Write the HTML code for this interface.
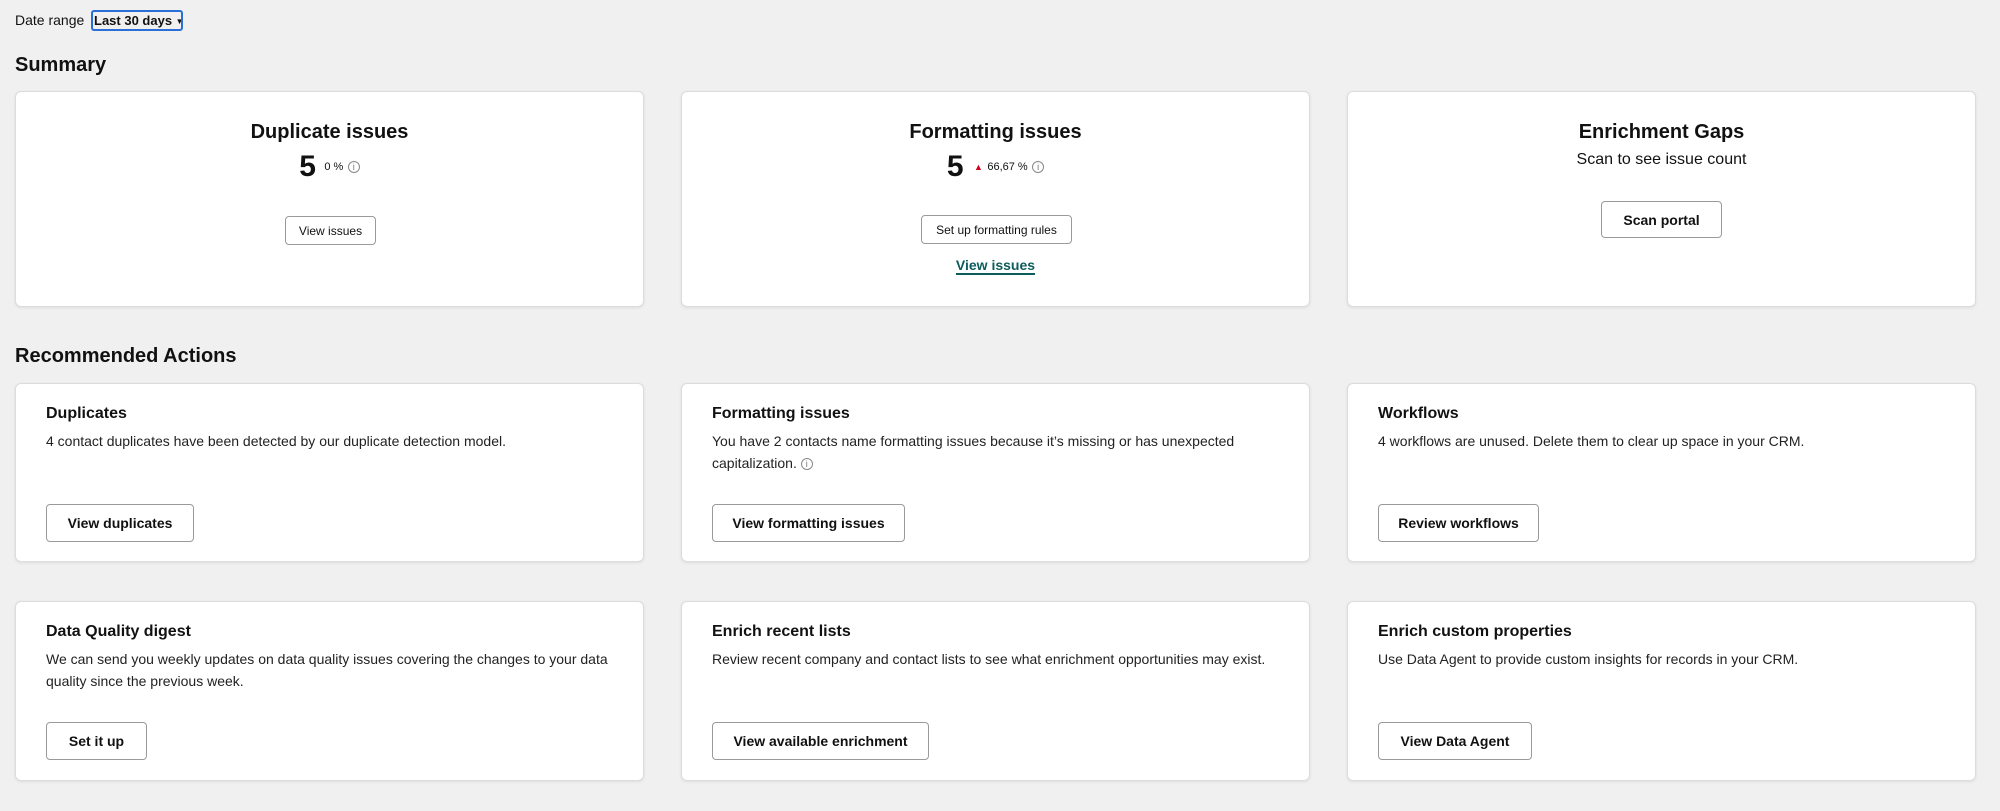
<!DOCTYPE html>
<html><head><meta charset="utf-8"><style>
*{box-sizing:border-box;margin:0;padding:0}
body{width:2000px;height:811px;background:#f0f0f0;font-family:"Liberation Sans",sans-serif;color:#111;position:relative;overflow:hidden}
.abs{position:absolute}
.card{position:absolute;background:#fff;border:1px solid #dcdcdc;border-radius:6px;box-shadow:0 1px 3px rgba(0,0,0,.08)}
.ctr{position:absolute;left:0;right:0;text-align:center}
.btn{position:absolute;border:1px solid #9a9a9a;border-radius:4px;background:#fff;font-size:14px;font-weight:bold;display:flex;align-items:center;justify-content:center;color:#111;white-space:nowrap}
.sbtn{font-weight:normal;font-size:12px}
.t{position:absolute;left:30px;font-size:16px;font-weight:bold}
.d{position:absolute;left:30px;right:30px;font-size:14px;line-height:22px;color:#222}
.i{display:inline-block;width:12px;height:12px;border:1px solid #888;border-radius:50%;font-size:9px;line-height:10px;text-align:center;color:#777;vertical-align:middle;font-style:normal}
</style></head><body>
<div class="abs" style="left:15px;top:12px;font-size:14px">Date range</div>
<div class="abs" style="left:91px;top:10px;width:92px;height:21px;border:2px solid #2a6fd6;border-radius:3px;font-size:13px;font-weight:bold;padding-left:1px;line-height:17px;white-space:nowrap;overflow:hidden">Last 30 days <span style="font-size:8px;vertical-align:middle">▼</span></div>
<div class="abs" style="left:15px;top:54px;font-size:20px;font-weight:bold">Summary</div>

<div class="card" style="left:15px;top:91px;width:629px;height:216px">
 <div class="ctr" style="top:29px;font-size:20px;font-weight:bold">Duplicate issues</div>
 <div class="ctr" style="top:58px"><span style="font-size:30px;font-weight:bold;vertical-align:middle">5</span> <span style="font-size:11px;vertical-align:middle;margin-left:4px">0 %</span> <i class="i">i</i></div>
 <div class="btn sbtn" style="left:269px;top:124px;width:91px;height:29px">View issues</div>
</div>
<div class="card" style="left:681px;top:91px;width:629px;height:216px">
 <div class="ctr" style="top:29px;font-size:20px;font-weight:bold">Formatting issues</div>
 <div class="ctr" style="top:58px"><span style="font-size:30px;font-weight:bold;vertical-align:middle">5</span> <span style="color:#d0021b;font-size:9px;vertical-align:middle;margin-left:6px">▲</span> <span style="font-size:11px;vertical-align:middle">66,67 %</span> <i class="i">i</i></div>
 <div class="btn sbtn" style="left:239px;top:123px;width:151px;height:29px">Set up formatting rules</div>
 <div class="ctr" style="top:165px;font-size:14px;font-weight:bold;color:#0d5c5c"><span style="border-bottom:2px solid #0d5c5c">View issues</span></div>
</div>
<div class="card" style="left:1347px;top:91px;width:629px;height:216px">
 <div class="ctr" style="top:29px;font-size:20px;font-weight:bold">Enrichment Gaps</div>
 <div class="ctr" style="top:59px;font-size:16px">Scan to see issue count</div>
 <div class="btn" style="left:253px;top:109px;width:121px;height:37px">Scan portal</div>
</div>

<div class="abs" style="left:15px;top:345px;font-size:20px;font-weight:bold">Recommended Actions</div>

<div class="card" style="left:15px;top:383px;width:629px;height:179px">
 <div class="t" style="top:21px">Duplicates</div>
 <div class="d" style="top:46px">4 contact duplicates have been detected by our duplicate detection model.</div>
 <div class="btn" style="left:30px;top:120px;width:148px;height:38px">View duplicates</div>
</div>
<div class="card" style="left:681px;top:383px;width:629px;height:179px">
 <div class="t" style="top:21px">Formatting issues</div>
 <div class="d" style="top:46px">You have 2 contacts name formatting issues because it’s missing or has unexpected capitalization. <i class="i">i</i></div>
 <div class="btn" style="left:30px;top:120px;width:193px;height:38px">View formatting issues</div>
</div>
<div class="card" style="left:1347px;top:383px;width:629px;height:179px">
 <div class="t" style="top:21px">Workflows</div>
 <div class="d" style="top:46px">4 workflows are unused. Delete them to clear up space in your CRM.</div>
 <div class="btn" style="left:30px;top:120px;width:161px;height:38px">Review workflows</div>
</div>

<div class="card" style="left:15px;top:601px;width:629px;height:180px">
 <div class="t" style="top:21px">Data Quality digest</div>
 <div class="d" style="top:46px">We can send you weekly updates on data quality issues covering the changes to your data quality since the previous week.</div>
 <div class="btn" style="left:30px;top:120px;width:101px;height:38px">Set it up</div>
</div>
<div class="card" style="left:681px;top:601px;width:629px;height:180px">
 <div class="t" style="top:21px">Enrich recent lists</div>
 <div class="d" style="top:46px">Review recent company and contact lists to see what enrichment opportunities may exist.</div>
 <div class="btn" style="left:30px;top:120px;width:217px;height:38px">View available enrichment</div>
</div>
<div class="card" style="left:1347px;top:601px;width:629px;height:180px">
 <div class="t" style="top:21px">Enrich custom properties</div>
 <div class="d" style="top:46px">Use Data Agent to provide custom insights for records in your CRM.</div>
 <div class="btn" style="left:30px;top:120px;width:154px;height:38px">View Data Agent</div>
</div>
</body></html>
